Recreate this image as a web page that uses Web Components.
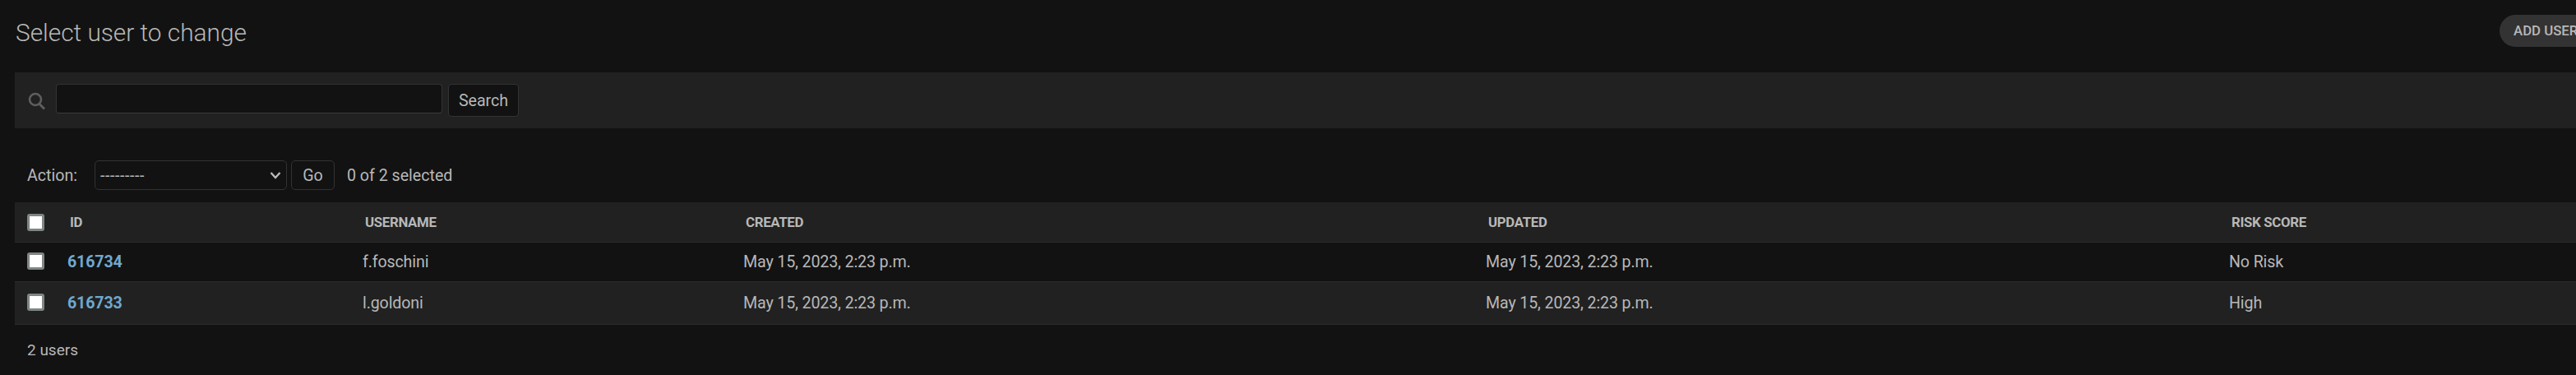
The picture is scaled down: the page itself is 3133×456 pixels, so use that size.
<!DOCTYPE html>
<html lang="en">
<head>
<meta charset="utf-8">
<title>Select user to change</title>
<style>
  html, body { margin: 0; background: #121212; overflow: hidden; }
  body { width: 3133px; height: 456px; font-family: Roboto, "Liberation Sans", sans-serif; color: #b8b8b8; }
</style>
</head>
<body>
<change-list>
  <list-header slot="header" title-text="Select user to change" add-label="ADD USER"></list-header>
  <search-bar slot="search"></search-bar>
  <action-bar slot="actions" count="0 of 2 selected"></action-bar>
  <result-head slot="table"></result-head>
  <result-row slot="table" uid="616734" username="f.foschini" created="May 15, 2023, 2:23 p.m." updated="May 15, 2023, 2:23 p.m." risk="No Risk"></result-row>
  <result-row slot="table" alt uid="616733" username="l.goldoni" created="May 15, 2023, 2:23 p.m." updated="May 15, 2023, 2:23 p.m." risk="High"></result-row>
  <span slot="paginator">2 users</span>
</change-list>

<script>
// column widths shared by the head and the rows
const columns = '21px 28px 359px 463px 903px 904px 1fr';

class ChangeList extends HTMLElement {
  constructor() {
    super();
    this.attachShadow({mode: 'open'});
    this.shadowRoot.innerHTML = `
      <style>
        :host { display: block; width: 3190px; padding-left: 18px; box-sizing: border-box; }
        .table { display: flex; flex-direction: column; margin-top: 15px; }
        .paginator { font-size: 19px; padding: 20px 0 0 15px; line-height: 22px; }
      </style>
      <slot name="header"></slot>
      <slot name="search"></slot>
      <slot name="actions"></slot>
      <div class="table"><slot name="table"></slot></div>
      <div class="paginator"><slot name="paginator"></slot></div>`;
  }
}

class ListHeader extends HTMLElement {
  connectedCallback() {
    this.attachShadow({mode: 'open'});
    this.shadowRoot.innerHTML = `
      <style>
        :host { display: flex; justify-content: space-between; align-items: flex-start; height: 88px; }
        h1 { margin: 22px 0 0 1px; font: 300 29.8px/36px Roboto, sans-serif; color: #b8b8b8; }
        a { display: block; height: 39px; width: 150px; padding-left: 17px; box-sizing: border-box; margin-top: 18px;
            border-radius: 20px; background: #333; color: #b8b8b8; font: 500 16.8px/39px Roboto, sans-serif;
            text-decoration: none; white-space: nowrap; }
      </style>
      <h1>${this.getAttribute('title-text')}</h1>
      <a href="#">${this.getAttribute('add-label')}</a>`;
  }
}

class SearchBar extends HTMLElement {
  constructor() {
    super();
    this.attachShadow({mode: 'open'});
    this.shadowRoot.innerHTML = `
      <style>
        :host { display: flex; align-items: flex-start; height: 68px; padding: 14px 0 0 16px; box-sizing: border-box; background: #212121; }
        svg { width: 22px; height: 22px; margin: 10px 12px 0 0; flex: none; }
        .input { width: 470px; height: 36px; box-sizing: border-box; background: #121212; border: 1px solid #333; border-bottom-color: #3c3c3c; border-radius: 4px; }
        button { width: 86px; height: 40px; margin-left: 7px; background: #121212; border: 1px solid #333; border-radius: 4px;
                 color: #b8b8b8; font: 19.6px Roboto, sans-serif; padding: 0; }
      </style>
      <svg viewBox="0 0 22 22" fill="none" stroke="#5e5e5e">
        <circle cx="9" cy="9" r="7" stroke-width="2.6"/>
        <path d="M14 14.5l6 6" stroke-width="2.8"/>
      </svg>
      <div class="input"></div>
      <button>Search</button>`;
  }
}

class ActionBar extends HTMLElement {
  connectedCallback() {
    this.attachShadow({mode: 'open'});
    this.shadowRoot.innerHTML = `
      <style>
        :host { display: flex; align-items: center; height: 36px; margin-top: 39px; padding-left: 15px; font-size: 19.6px; }
        .label { width: 82px; }
        .select { width: 234px; height: 36px; box-sizing: border-box; border: 1px solid #333; border-radius: 5px; background: #121212;
                  display: flex; align-items: center; justify-content: space-between; padding: 0 6px; }
        .select span { letter-spacing: .6px; }
        svg { width: 14px; height: 10px; }
        button { width: 53px; height: 36px; margin-left: 5px; background: #121212; border: 1px solid #333; border-radius: 5px;
                 color: #b8b8b8; font: 19.6px Roboto, sans-serif; padding: 0; }
        .count { margin-left: 15px; }
      </style>
      <span class="label">Action:</span>
      <div class="select"><span>---------</span>
        <svg viewBox="0 0 14 10" fill="none" stroke="#bbb" stroke-width="2.4"><path d="M1.5 2L7 8l5.5-6"/></svg>
      </div>
      <button>Go</button>
      <span class="count">${this.getAttribute('count')}</span>`;
  }
}

class RowCheck extends HTMLElement {
  constructor() {
    super();
    this.attachShadow({mode: 'open'});
    this.shadowRoot.innerHTML = `
      <style>
        :host { display: block; width: 21px; height: 21px; box-sizing: border-box; background: #fff; border: 3px solid #7f8685; border-radius: 3px; }
      </style>`;
  }
}

class ResultHead extends HTMLElement {
  constructor() {
    super();
    this.attachShadow({mode: 'open'});
    this.shadowRoot.innerHTML = `
      <style>
        :host { display: grid; grid-template-columns: ${columns}; align-items: center; height: 48px; padding-left: 15px;
                background: #212121; border-bottom: 1px solid #2b2b2b; color: #b8b8b8; font: 700 16.8px Roboto, sans-serif; letter-spacing: -.3px; }
        span { padding-left: 3px; }
      </style>
      <row-check></row-check><i></i>
      <span>ID</span><span>USERNAME</span><span>CREATED</span><span>UPDATED</span><span>RISK SCORE</span>`;
  }
}

class ResultRow extends HTMLElement {
  connectedCallback() {
    const a = (n) => this.getAttribute(n);
    this.attachShadow({mode: 'open'});
    this.shadowRoot.innerHTML = `
      <style>
        :host { display: grid; grid-template-columns: ${columns}; align-items: center; height: 47px; padding-left: 15px;
                background: #121212; border-bottom: 1px solid #2b2b2b; color: #b8b8b8; font: 19.6px Roboto, sans-serif; letter-spacing: -.12px; }
        :host([alt]) { height: 51px; background: #212121; }
        row-check { margin-bottom: 2px; }
        a { color: #6fa8d0; font-weight: 700; text-decoration: none; }
      </style>
      <row-check></row-check><i></i>
      <a href="#">${a('uid')}</a><span>${a('username')}</span><span>${a('created')}</span><span>${a('updated')}</span><span>${a('risk')}</span>`;
  }
}

customElements.define('row-check', RowCheck);
customElements.define('change-list', ChangeList);
customElements.define('list-header', ListHeader);
customElements.define('search-bar', SearchBar);
customElements.define('action-bar', ActionBar);
customElements.define('result-head', ResultHead);
customElements.define('result-row', ResultRow);
</script>
</body>
</html>
